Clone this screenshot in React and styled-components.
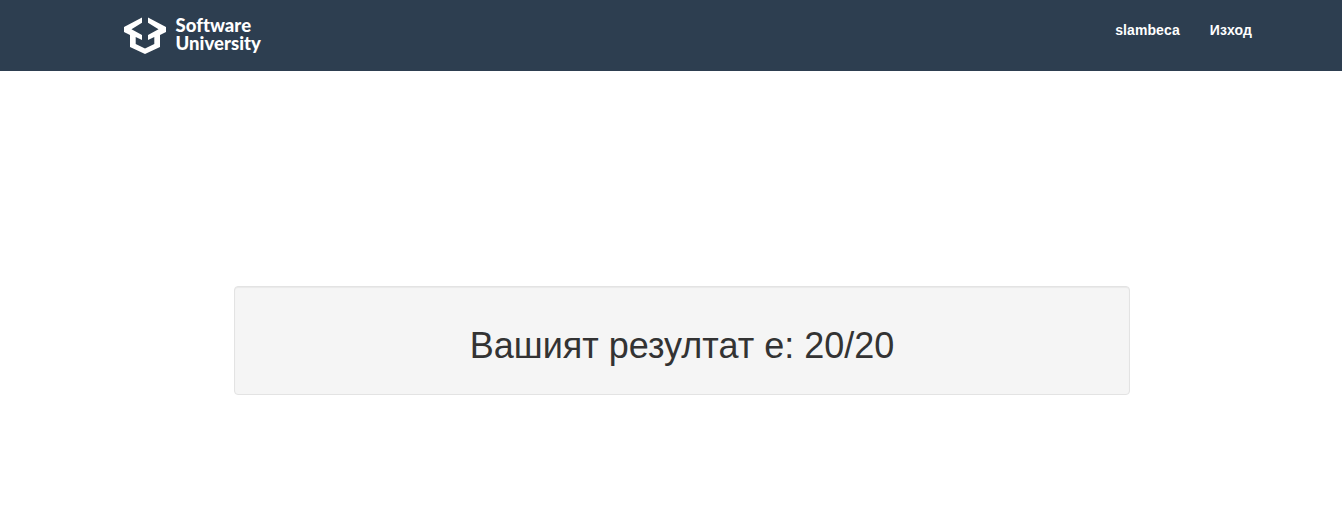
import React from "react";
import styled, { createGlobalStyle } from "styled-components";

const GlobalStyle = createGlobalStyle`
  * { box-sizing: border-box; }
  body {
    margin: 0;
    background: #fff;
    color: #333;
    font-family: "Liberation Sans", Arial, sans-serif;
  }
`;

const Header = styled.header`
  display: flex;
  justify-content: space-between;
  align-items: flex-start;
  height: 71px;
  padding: 17px 90px 0 124px;
  background: #2d3e50;
  color: #fff;
`;

const Brand = styled.div`
  display: flex;
  gap: 9.5px;
`;

const Mark = styled.svg`
  width: 42px;
  height: 37px;
  fill: #fff;
`;

const BrandName = styled.div`
  margin-top: -1px;
  font: 900 18.5px/18px Lato, sans-serif;
  letter-spacing: 0.04px;
  white-space: pre-line;
`;

const Nav = styled.nav`
  display: flex;
  gap: 30px;
  padding-top: 3px;
`;

const NavLink = styled.a`
  font-size: 14px;
  font-weight: 700;
  line-height: 20px;
  letter-spacing: 0.1px;
`;

const Main = styled.main`
  padding: 215px 212px 0 234px;
`;

const Well = styled.section`
  height: 109px;
  padding: 39px 19px 19px;
  background: #f5f5f5;
  border: 1px solid #e3e3e3;
  border-radius: 4px;
  box-shadow: inset 0 1px 1px rgba(0, 0, 0, 0.05);
`;

const Result = styled.h1`
  margin: 0;
  font-size: 36px;
  font-weight: 400;
  line-height: 40px;
  text-align: center;
`;

export default function App() {
  return (
    <>
      <GlobalStyle />
      <Header>
        <Brand>
          <Mark viewBox="0 0 42 37" aria-hidden="true">
            <path d="M18 0.5V5.8L7.5 12.3L18 18V23L11.7 20V27L21 31.5L30.3 27V20L24 23V18L34.5 12.3L24 5.8V0.5L42 10V15L36 18V30L21 37L6 30V18L0 15V10Z" />
          </Mark>
          <BrandName>{"Software\nUniversity"}</BrandName>
        </Brand>
        <Nav>
          <NavLink>slambeca</NavLink>
          <NavLink>Изход</NavLink>
        </Nav>
      </Header>
      <Main>
        <Well>
          <Result>Вашият резултат е: 20/20</Result>
        </Well>
      </Main>
    </>
  );
}
